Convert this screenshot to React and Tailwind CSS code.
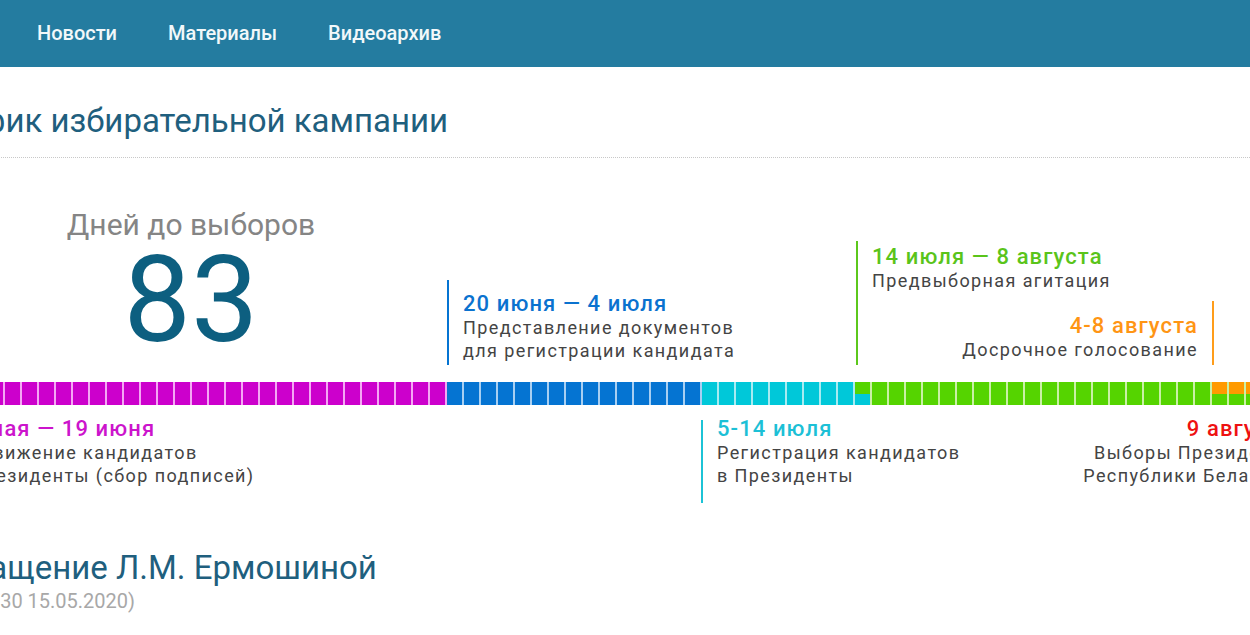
import React from 'react';

const C = {
  magenta: { top: 'bg-[#cc00cc]', bottom: 'bg-[#cc00cc]', tint: 'border-[#f4a6f4]' },
  blue: { top: 'bg-[#0574d2]', bottom: 'bg-[#0574d2]', tint: 'border-[#a8cff2]' },
  cyan: { top: 'bg-[#00c8d9]', bottom: 'bg-[#00c8d9]', tint: 'border-[#a8ebf1]' },
  greenCyan: { top: 'bg-[#55d400]', bottom: 'bg-[#00c8d9]', tint: 'border-[#c9f0a6]' },
  green: { top: 'bg-[#55d400]', bottom: 'bg-[#55d400]', tint: 'border-[#c9f0a6]' },
  orangeGreen: { top: 'bg-[#ff9a00]', bottom: 'bg-[#55d400]', tint: 'border-[#c9f0a6]' },
  red: { top: 'bg-[#ee1111]', bottom: 'bg-[#ee1111]', tint: 'border-[#f7b0b0]' },
};

// one cell per day, starting 21 May
const days = [];
for (let d = 0; d <= 80; d++) {
  if (d < 30) days.push(C.magenta);
  else if (d < 45) days.push(C.blue);
  else if (d < 54) days.push(C.cyan);
  else if (d === 54) days.push(C.greenCyan);
  else if (d < 75) days.push(C.green);
  else if (d < 80) days.push(C.orangeGreen);
  else days.push(C.red);
}

const Cell = ({ c }) => (
  <div className={`flex-none w-[17px] h-[23px] border-r-2 flex flex-col ${c.tint}`}>
    <div className={`flex-1 ${c.top}`} />
    <div className={`flex-1 ${c.bottom}`} />
  </div>
);

const Label = ({ date, lines, dateClass, lineClass, align = 'left', className = '' }) => (
  <div
    className={`absolute flex flex-col ${align === 'right' ? 'border-r-2 pr-[14px] text-right' : 'border-l-2 pl-[14px]'} ${lineClass} ${className}`}
  >
    <div className={`text-[22px] leading-[24px] tracking-[1.1px] font-medium whitespace-nowrap ${dateClass}`}>{date}</div>
    {lines.map((l) => (
      <div key={l} className="text-[18px] leading-[23px] tracking-[1.4px] text-[#444] whitespace-nowrap">
        {l}
      </div>
    ))}
  </div>
);

export default function App() {
  return (
    <div className="w-[1250px] h-[635px] overflow-hidden bg-white font-['Roboto',sans-serif]">
      <nav className="h-[67px] bg-[#247ca0] flex items-center pl-[37px] gap-[51px] pb-[2px]">
        {['Новости', 'Материалы', 'Видеоархив'].map((t) => (
          <a key={t} className="text-[20px] font-medium text-[#f2f8fa]">
            {t}
          </a>
        ))}
      </nav>

      <main className="ml-[-70px] w-[1420px]">
        <h1 className="pt-[35px] pb-[17px] text-[33px] leading-[38px] text-[#1f5f7e] border-b border-dotted border-[#c8c8c8]">
          График избирательной кампании
        </h1>

        <section className="relative h-[362px]">
          <div className="h-[224px] ml-[111px] w-[300px] text-center pt-[49px]">
            <div className="text-[30px] leading-[36px] text-[#858585]">Дней до выборов</div>
            <div className="text-[120px] leading-[120px] mt-[-3px] text-[#0d5f80]">83</div>
          </div>

          <div className="flex ml-[7px]">
            {days.map((c, i) => (
              <Cell key={i} c={c} />
            ))}
          </div>

          <Label
            className="left-[517px] top-[122px] h-[85px] justify-end pb-[3px]"
            lineClass="border-[#0574d2]"
            dateClass="text-[#0a72cf]"
            date="20 июня — 4 июля"
            lines={['Представление документов', 'для регистрации кандидата']}
          />
          <Label
            className="left-[926px] top-[83px] h-[124px] pt-[4px]"
            lineClass="border-[#5cc81c]"
            dateClass="text-[#5ac41a]"
            date="14 июля — 8 августа"
            lines={['Предвыборная агитация']}
          />
          <Label
            align="right"
            className="left-[984px] w-[300px] top-[143px] h-[64px] justify-end pb-[4px]"
            lineClass="border-[#ff9d1a]"
            dateClass="text-[#ff9514]"
            date="4-8 августа"
            lines={['Досрочное голосование']}
          />

          <Label
            className="left-[7px] top-[262px] h-[83px]"
            lineClass="border-[#cc00cc]"
            dateClass="text-[#cc14cc] mt-[-3px]"
            date="21 мая — 19 июня"
            lines={['Выдвижение кандидатов', 'в Президенты (сбор подписей)']}
          />
          <Label
            className="left-[771px] top-[262px] h-[83px]"
            lineClass="border-[#1cc3d6]"
            dateClass="text-[#1cc0d6] mt-[-3px]"
            date="5-14 июля"
            lines={['Регистрация кандидатов', 'в Президенты']}
          />
          <Label
            align="right"
            className="left-[1079px] w-[300px] top-[262px] h-[83px]"
            lineClass="border-[#ee1111]"
            dateClass="text-[#ee1111] mt-[-3px]"
            date="9 августа"
            lines={['Выборы Президента', 'Республики Беларусь']}
          />
        </section>

        <h2 className="pt-[29px] text-[33px] leading-[38px] text-[#1f5f7e]">Обращение Л.М. Ермошиной</h2>
        <div className="mt-[2px] ml-[36px] text-[20px] leading-[24px] text-[#a8a8a8]">(12:30 15.05.2020)</div>
      </main>
    </div>
  );
}
